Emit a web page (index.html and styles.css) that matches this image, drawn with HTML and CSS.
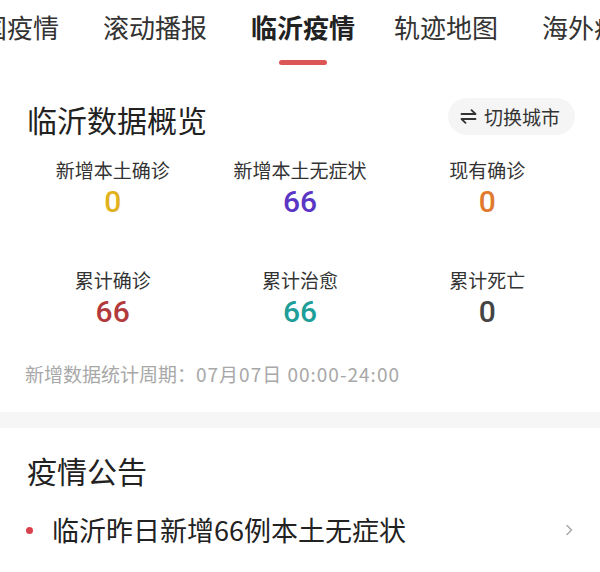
FILE: index.html
```html
<!DOCTYPE html>
<html lang="zh-CN">
<head>
  <meta charset="UTF-8" />
  <meta name="viewport" content="width=device-width, initial-scale=1.0"/>
  <title>临沂疫情</title>
  <link rel="stylesheet" href="styles.css">
</head>
<body>

<nav class="tabs">
  <div class="tab"><span>全国疫情</span></div>
  <div class="tab"><span>滚动播报</span></div>
  <div class="tab active"><span>临沂疫情</span><i class="tab-line"></i></div>
  <div class="tab"><span>轨迹地图</span></div>
  <div class="tab"><span>海外疫情</span></div>
</nav>

<section class="overview">
  <div class="overview-head">
    <h2>临沂数据概览</h2>
    <button class="switch-btn">
      <svg width="17" height="15" viewBox="0 0 17 15" fill="none" stroke="#333" stroke-width="1.8" stroke-linecap="round" stroke-linejoin="round">
        <path d="M1.5 5 H15.5 L11.5 1.2"/>
        <path d="M15.5 10 H1.5 L5.5 13.8"/>
      </svg>
      切换城市
    </button>
  </div>

  <div class="stats">
    <div class="stat">
      <div class="stat-label">新增本土确诊</div>
      <div class="stat-num gold">0</div>
    </div>
    <div class="stat">
      <div class="stat-label">新增本土无症状</div>
      <div class="stat-num purple">66</div>
    </div>
    <div class="stat">
      <div class="stat-label">现有确诊</div>
      <div class="stat-num orange">0</div>
    </div>
    <div class="stat">
      <div class="stat-label">累计确诊</div>
      <div class="stat-num red">66</div>
    </div>
    <div class="stat">
      <div class="stat-label">累计治愈</div>
      <div class="stat-num teal">66</div>
    </div>
    <div class="stat">
      <div class="stat-label">累计死亡</div>
      <div class="stat-num dark">0</div>
    </div>
  </div>

  <div class="period">新增数据统计周期：<span class="period-time">07月07日 00:00-24:00</span></div>
</section>

<section class="notice">
  <h2>疫情公告</h2>
  <a href="#" class="notice-item">
    <i class="dot"></i>
    <span class="notice-text">临沂昨日新增66例本土无症状</span>
    <svg class="chevron" width="10" height="12" viewBox="0 0 10 12" fill="none" stroke="#a8a8a8" stroke-width="1.5" stroke-linecap="round" stroke-linejoin="round">
      <path d="M3 1.5 L7.5 6 L3 10.5"/>
    </svg>
  </a>
</section>

</body>
</html>
```

FILE: styles.css
```css
body {
  margin: 0;
  padding: 0;
  background: #fff;
  color: #333;
  font-family: "Noto Sans CJK SC", sans-serif;
}

h2 {
  margin: 0;
  font-size: 30px;
  font-weight: 400;
  line-height: 44px;
  color: #222;
}

/* top tabs */
.tabs {
  display: flex;
  align-items: flex-start;
  gap: 44px;
  margin-left: -45px;
  height: 65px;
  overflow: hidden;
  white-space: nowrap;
}

.tab {
  display: flex;
  flex-direction: column;
  align-items: center;
  flex-shrink: 0;
  font-size: 26px;
  line-height: 53px;
  color: #333;
}

.tab.active {
  margin-right: -5px;
  font-weight: 700;
  color: #222;
}

.tab-line {
  display: block;
  width: 48px;
  height: 5px;
  margin-top: 7px;
  border-radius: 3px;
  background-color: #dc5656;
}

/* overview */
.overview {
  padding-top: 32px;
  padding-bottom: 25px;
  border-bottom: 16px solid #f6f6f6;
}

.overview-head {
  display: flex;
  justify-content: space-between;
  align-items: flex-start;
  padding: 0 25px 0 27px;
}

.switch-btn {
  display: flex;
  align-items: center;
  gap: 7px;
  height: 37px;
  margin-top: 1px;
  padding: 0 15px 0 12px;
  border: none;
  border-radius: 19px;
  background-color: #f5f5f5;
  font-family: inherit;
  font-size: 19px;
  color: #333;
}

.stats {
  display: grid;
  grid-template-columns: repeat(3, 1fr);
  row-gap: 46px;
  margin-top: 16px;
  padding: 0 19px;
}

.stat {
  text-align: center;
}

.stat-label {
  font-size: 19px;
  line-height: 26px;
  color: #333;
}

.stat-num {
  font-family: Roboto, "Noto Sans", sans-serif;
  font-size: 30px;
  font-weight: 500;
  line-height: 38px;
}

.gold { color: #e2b21e; }
.purple { color: #5a36c4; }
.orange { color: #e07a2e; }
.red { color: #b23a3c; }
.teal { color: #1d9e98; }
.dark { color: #444; }

.period {
  margin-top: 30px;
  padding-left: 25px;
  font-size: 19px;
  line-height: 26px;
  color: #a8a8a8;
}

.period-time {
  letter-spacing: 1px;
}

/* notice */
.notice {
  padding: 20px 25px 0 27px;
}

.notice-item {
  display: flex;
  align-items: center;
  margin-top: 18px;
  text-decoration: none;
  color: #222;
}

.dot {
  width: 7px;
  height: 7px;
  margin-left: -1px;
  border-radius: 50%;
  background-color: #d9424c;
}

.notice-text {
  flex: 1;
  margin-left: 19px;
  font-size: 27px;
  line-height: 40px;
}

.chevron {
  margin-right: 1px;
}
```
